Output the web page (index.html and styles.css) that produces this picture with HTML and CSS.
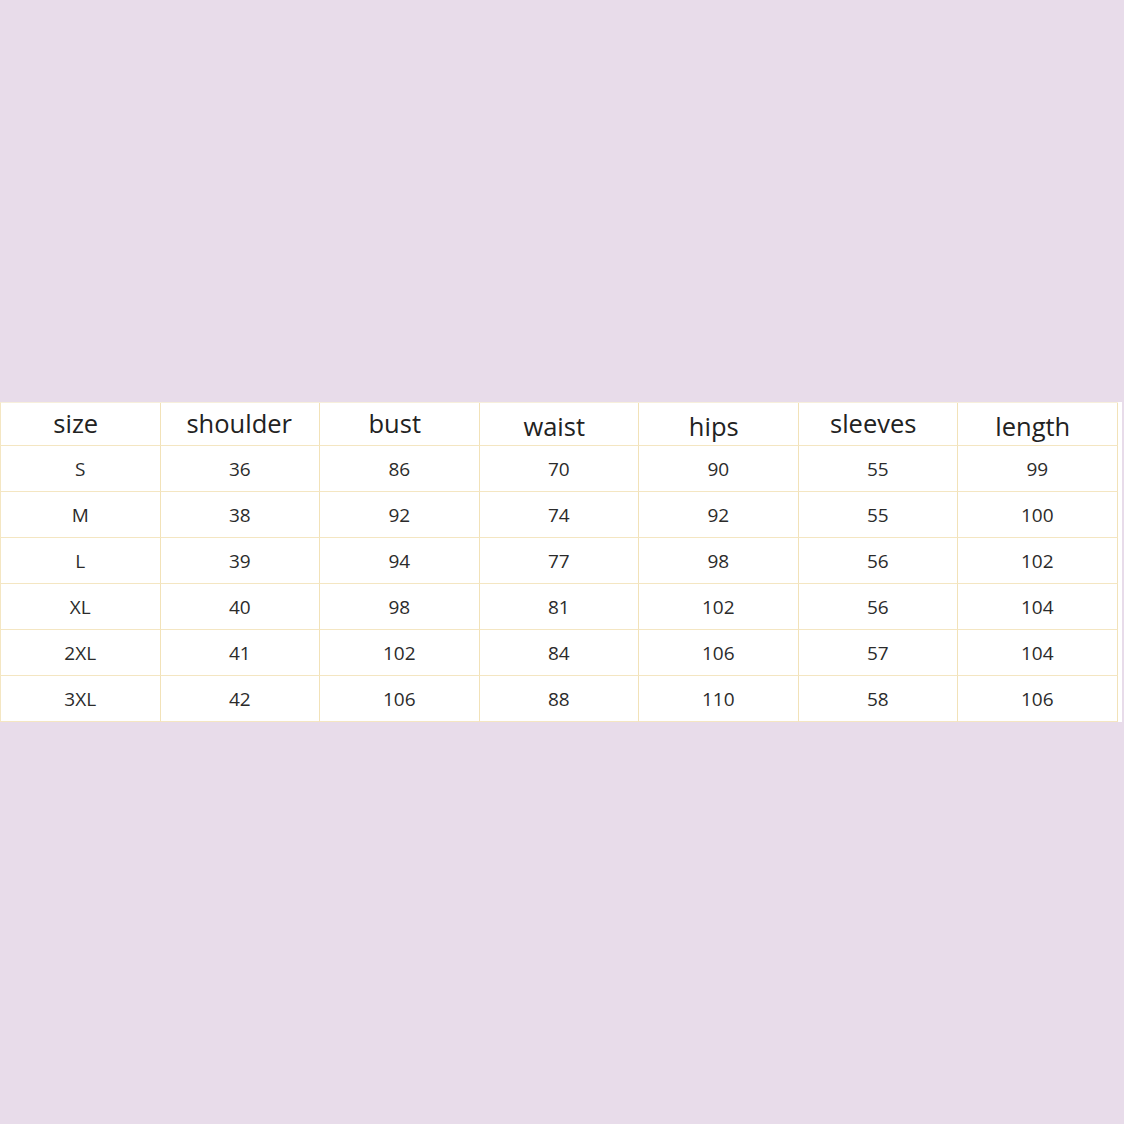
FILE: index.html
```html
<!DOCTYPE html>
<html>
<head>
<meta charset="utf-8">
<link rel="stylesheet" href="styles.css">
</head>
<body>
<div class="page">
  <div class="sheet">
    <div class="table">
      <div class="cell head">size</div><div class="cell head shift">shoulder</div><div class="cell head">bust</div><div class="cell head low">waist</div><div class="cell head low">hips</div><div class="cell head">sleeves</div><div class="cell head low">length</div>
      <div class="cell">S</div><div class="cell">36</div><div class="cell">86</div><div class="cell">70</div><div class="cell">90</div><div class="cell">55</div><div class="cell">99</div>
      <div class="cell">M</div><div class="cell">38</div><div class="cell">92</div><div class="cell">74</div><div class="cell">92</div><div class="cell">55</div><div class="cell">100</div>
      <div class="cell">L</div><div class="cell">39</div><div class="cell">94</div><div class="cell">77</div><div class="cell">98</div><div class="cell">56</div><div class="cell">102</div>
      <div class="cell">XL</div><div class="cell">40</div><div class="cell">98</div><div class="cell">81</div><div class="cell">102</div><div class="cell">56</div><div class="cell">104</div>
      <div class="cell">2XL</div><div class="cell">41</div><div class="cell">102</div><div class="cell">84</div><div class="cell">106</div><div class="cell">57</div><div class="cell">104</div>
      <div class="cell">3XL</div><div class="cell">42</div><div class="cell">106</div><div class="cell">88</div><div class="cell">110</div><div class="cell">58</div><div class="cell">106</div>
    </div>
  </div>
</div>
</body>
</html>
```
FILE: styles.css
```css
html, body {
  margin: 0;
  padding: 0;
  background: #e8dcea;
}
.page {
  width: 1124px;
  height: 1124px;
  padding-top: 402px;
  box-sizing: border-box;
}
.sheet {
  width: 1122px;
  background: #ffffff;
  box-sizing: border-box;
}
.table {
  display: grid;
  grid-template-columns: repeat(7, 159.5px);
  grid-template-rows: 43px repeat(6, 46px);
  border-left: 1px solid #f4e6c2;
  border-top: 1px solid #f7efdc;
  width: 1118px;
  box-sizing: border-box;
  font-family: "Open Sans", "Noto Sans", sans-serif;
  color: #2b2b2b;
}
.cell {
  display: flex;
  align-items: center;
  justify-content: center;
  border-right: 1px solid #f2e2b8;
  border-bottom: 1px solid #f4e6c2;
  font-size: 19px;
}
.head {
  font-size: 25.5px;
  padding-right: 9px;
  padding-bottom: 2px;
  color: #222;
}
.head.shift {
  padding-right: 1px;
}
.head.low {
  padding-bottom: 0;
  padding-top: 3px;
}
```
